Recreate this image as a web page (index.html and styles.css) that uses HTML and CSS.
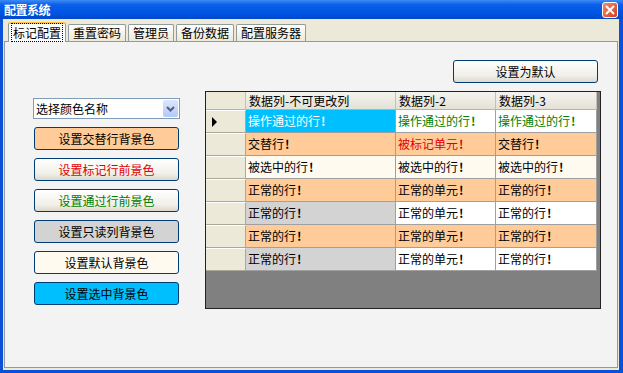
FILE: index.html
```html
<!DOCTYPE html>
<html lang="zh-CN">
<head>
    <meta charset="UTF-8">
    <title>配置系统</title>
    <link rel="stylesheet" href="styles.css">
</head>
<body>
    <div class="window">
        <div class="titlebar">
            <span class="title">配置系统</span>
            <span class="close">
                <svg width="10" height="10" viewBox="0 0 10 10"><path d="M1 1 L9 9 M9 1 L1 9" stroke="#fff" stroke-width="2"/></svg>
            </span>
        </div>
        <div class="client">
            <div class="tabs">
                <div class="tab active"><span class="focus">标记配置</span></div>
                <div class="tab">重置密码</div>
                <div class="tab">管理员</div>
                <div class="tab">备份数据</div>
                <div class="tab">配置服务器</div>
            </div>
            <div class="page">
                <div class="side">
                    <div class="combo">
                        <span>选择颜色名称</span>
                        <span class="drop">
                            <svg width="9" height="6" viewBox="0 0 9 6"><path d="M1 1 L4.5 4.5 L8 1" stroke="#4d6185" stroke-width="2" fill="none"/></svg>
                        </span>
                    </div>
                    <button class="btn alt">设置交替行背景色</button>
                    <button class="btn red">设置标记行前景色</button>
                    <button class="btn green">设置通过行前景色</button>
                    <button class="btn readonly">设置只读列背景色</button>
                    <button class="btn normal">设置默认背景色</button>
                    <button class="btn selected">设置选中背景色</button>
                </div>
                <div class="main">
                    <button class="btn default">设置为默认</button>
                    <div class="grid">
                        <div class="rows">
                            <div class="hd corner"></div>
                            <div class="hd">数据列-不可更改列</div>
                            <div class="hd">数据列-2</div>
                            <div class="hd">数据列-3</div>

                            <div class="rh"><span class="arrow"></span></div>
                            <div class="c sel">操作通过的行<b>!</b></div>
                            <div class="c white pass">操作通过的行<b>!</b></div>
                            <div class="c white pass">操作通过的行<b>!</b></div>

                            <div class="rh"></div>
                            <div class="c peach">交替行<b>!</b></div>
                            <div class="c peach mark">被标记单元<b>!</b></div>
                            <div class="c peach">交替行<b>!</b></div>

                            <div class="rh"></div>
                            <div class="c floral">被选中的行<b>!</b></div>
                            <div class="c floral">被选中的行<b>!</b></div>
                            <div class="c floral">被选中的行<b>!</b></div>

                            <div class="rh"></div>
                            <div class="c peach">正常的行<b>!</b></div>
                            <div class="c peach">正常的单元<b>!</b></div>
                            <div class="c peach">正常的行<b>!</b></div>

                            <div class="rh"></div>
                            <div class="c gray">正常的行<b>!</b></div>
                            <div class="c white">正常的单元<b>!</b></div>
                            <div class="c white">正常的行<b>!</b></div>

                            <div class="rh"></div>
                            <div class="c peach">正常的行<b>!</b></div>
                            <div class="c peach">正常的单元<b>!</b></div>
                            <div class="c peach">正常的行<b>!</b></div>

                            <div class="rh"></div>
                            <div class="c gray">正常的行<b>!</b></div>
                            <div class="c white">正常的单元<b>!</b></div>
                            <div class="c white">正常的行<b>!</b></div>
                        </div>
                    </div>
                </div>
            </div>
        </div>
    </div>
</body>
</html>
```

FILE: styles.css
```css
body {
    margin: 0;
    font-family: "Noto Sans CJK SC", "DejaVu Sans", sans-serif;
    font-size: 12px;
    color: #000;
}

.window {
    width: 623px;
    height: 373px;
    box-sizing: border-box;
    background: #0a50d8;
    padding: 0 4px 3px 3px;
    display: flex;
    flex-direction: column;
}

.titlebar {
    height: 19px;
    margin: 0 -4px 0 -3px;
    padding: 0 5px 0 4px;
    background: linear-gradient(#3d8bf5 0%, #0a5fe8 25%, #0054e3 70%, #0148c8 100%);
    display: flex;
    align-items: center;
    justify-content: space-between;
}

.title {
    color: #fff;
    font-weight: bold;
    letter-spacing: -0.5px;
}

.close {
    width: 14px;
    height: 14px;
    border: 1px solid #fff;
    border-radius: 3px;
    background: linear-gradient(135deg, #f08a6c, #d6401d);
    display: flex;
    align-items: center;
    justify-content: center;
}

.client {
    flex: 1;
    background: #ece9d8;
    display: flex;
    flex-direction: column;
    padding: 2px 1px 2px 1px;
}

.tabs {
    display: flex;
    align-items: flex-end;
    padding-left: 4px;
    height: 20px;
    gap: 2px;
}

.tab {
    height: 16px;
    line-height: 16px;
    padding: 0 4px;
    border: 1px solid #919b9c;
    border-bottom: none;
    border-radius: 2px 2px 0 0;
    background: linear-gradient(#fefefe, #ece9d8);
}

.tab.active {
    height: 18px;
    line-height: 18px;
    background: #fcfcfe;
    border-top: 2px solid #ffc83c;
    margin-bottom: -1px;
    position: relative;
    z-index: 1;
    padding: 0 2px;
}

.focus {
    border: 1px dotted #000;
    padding: 0 1px;
}

.page {
    flex: 1;
    border: 1px solid #919b9c;
    background: #f3f3f3;
    display: flex;
}

.side {
    width: 147px;
    padding: 56px 0 0 28px;
    display: flex;
    flex-direction: column;
    gap: 8px;
}

.combo {
    height: 19px;
    border: 1px solid #7f9db9;
    background: #fff;
    display: flex;
    align-items: center;
    justify-content: space-between;
    padding-left: 2px;
}

.drop {
    width: 15px;
    height: 17px;
    margin-right: 1px;
    background: linear-gradient(#dce6fd, #b5c9f7);
    border-radius: 2px;
    display: flex;
    align-items: center;
    justify-content: center;
}

.btn {
    font-family: inherit;
    font-size: 12px;
    height: 23px;
    border: 1px solid #003c74;
    border-radius: 3px;
    background: linear-gradient(#ffffff, #f0efe8 70%, #dcd9cc);
    padding: 0;
    color: #000;
}

.side .btn {
    width: 145px;
    margin-left: 1px;
}

.btn.alt { background: #ffcc99; }
.btn.red { color: #e00000; }
.btn.green { color: #008000; }
.btn.readonly { background: #d3d3d3; }
.btn.normal { background: #fffaf0; }
.btn.selected { background: #00bfff; }

.main {
    margin-left: 25px;
    padding-top: 18px;
    display: flex;
    flex-direction: column;
    align-items: flex-end;
    gap: 8px;
}

.btn.default {
    width: 145px;
    margin-right: 3px;
}

.grid {
    width: 394px;
    height: 216px;
    border: 1px solid #222;
    background: #808080;
}

.rows {
    display: grid;
    grid-template-columns: 40px 150px 100px 101px;
    grid-template-rows: 18px;
    grid-auto-rows: 23px;
}

.hd {
    background: linear-gradient(#f4f3ee, #e4e2d6);
    border-right: 1px solid #c4c1b3;
    border-bottom: 1px solid #b6b3a4;
    padding-left: 3px;
    line-height: 17px;
    white-space: nowrap;
    overflow: hidden;
}

.hd.corner {
    background: #ece9d8;
}

.rh {
    background: #ece9d8;
    border-top: 1px solid #fff;
    border-right: 1px solid #aca899;
    border-bottom: 1px solid #aca899;
    display: flex;
    align-items: center;
    padding-left: 6px;
}

.arrow {
    width: 0;
    height: 0;
    border-top: 5px solid transparent;
    border-bottom: 5px solid transparent;
    border-left: 5px solid #000;
}

.c {
    border-right: 1px solid #a0a0a0;
    border-bottom: 1px solid #a0a0a0;
    padding-left: 2px;
    line-height: 22px;
    white-space: nowrap;
}

.c b {
    margin-left: 1px;
}

.c.sel { background: #00bfff; color: #fff; }
.c.white { background: #fff; }
.c.peach { background: #ffcc99; }
.c.floral { background: #fffaf0; }
.c.gray { background: #d3d3d3; }
.c.pass { color: #008000; }
.c.mark { color: #e00000; }
```
